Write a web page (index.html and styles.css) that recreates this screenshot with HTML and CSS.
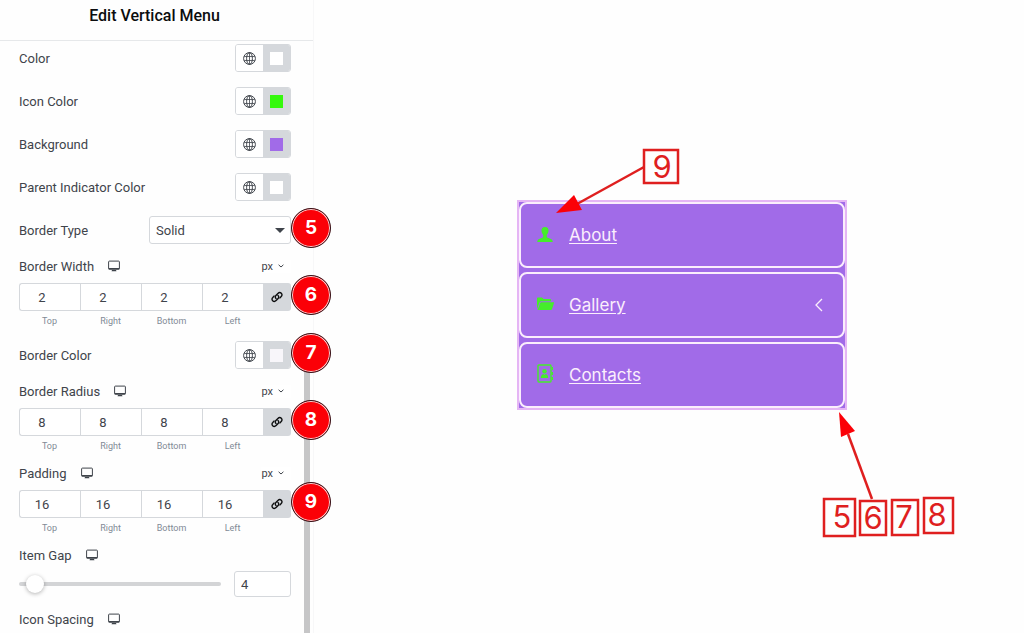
FILE: index.html
```html
<!DOCTYPE html>
<html lang="en">
<head>
    <meta charset="UTF-8">
    <meta name="viewport" content="width=device-width, initial-scale=1.0">
    <title>Edit Vertical Menu</title>
    <link rel="stylesheet" href="styles.css">
</head>
<body>
    <!-- shared icons -->
    <svg class="sprite" aria-hidden="true">
        <symbol id="globe" viewBox="0 0 13 13">
            <g fill="none" stroke="currentColor">
                <circle cx="6.5" cy="6.5" r="5.9"/>
                <ellipse cx="6.5" cy="6.5" rx="2.9" ry="5.9"/>
                <path d="M1.2 4.5h10.6M1.2 8.5h10.6M6.5.6v11.8" stroke-width=".8"/>
            </g>
        </symbol>
        <symbol id="desktop" viewBox="0 0 12 12">
            <rect x=".6" y="1.1" width="10.8" height="8" rx=".8" fill="none" stroke="currentColor"/>
            <path d="M.6 8h10.8v1.6H.6zM4 10h4l.5 1.2h-5z" fill="currentColor"/>
        </symbol>
        <symbol id="link" viewBox="0 0 12 12">
            <g fill="none" stroke="currentColor" stroke-width="1.4" stroke-linecap="round">
                <path d="M5 7.5C4 6.6 4 5.3 4.9 4.4l2-2c2.4-2.3 5.6.9 3.3 3.2L9 6.9"/>
                <path d="M7 4.5c1 .9 1 2.2.1 3.1l-2 2c-2.4 2.3-5.6-.9-3.3-3.2L3 5.1"/>
            </g>
        </symbol>
        <symbol id="caret" viewBox="0 0 6 4">
            <path d="M.6.8 3 3 5.4.8" fill="none" stroke="currentColor"/>
        </symbol>
    </svg>

    <aside class="panel">
        <h1 class="panel-title">Edit Vertical Menu</h1>
        <div class="controls">
            <div class="row">
                <span class="label">Color</span>
                <div class="color-control">
                    <button class="globe" aria-label="Global color"><svg class="icon"><use href="#globe"/></svg></button>
                    <button class="picker" aria-label="Pick color"><span class="swatch"></span></button>
                </div>
            </div>
            <div class="row">
                <span class="label">Icon Color</span>
                <div class="color-control">
                    <button class="globe" aria-label="Global icon color"><svg class="icon"><use href="#globe"/></svg></button>
                    <button class="picker" aria-label="Pick icon color"><span class="swatch green"></span></button>
                </div>
            </div>
            <div class="row">
                <span class="label">Background</span>
                <div class="color-control">
                    <button class="globe" aria-label="Global background"><svg class="icon"><use href="#globe"/></svg></button>
                    <button class="picker" aria-label="Pick background"><span class="swatch purple"></span></button>
                </div>
            </div>
            <div class="row">
                <span class="label">Parent Indicator Color</span>
                <div class="color-control">
                    <button class="globe" aria-label="Global parent indicator color"><svg class="icon"><use href="#globe"/></svg></button>
                    <button class="picker" aria-label="Pick parent indicator color"><span class="swatch"></span></button>
                </div>
            </div>
            <div class="row">
                <label class="label" for="border-type">Border Type</label>
                <div class="select-wrap">
                    <select id="border-type">
                        <option>Solid</option>
                        <option>Dashed</option>
                        <option>Dotted</option>
                    </select>
                </div>
                <span class="badge">5</span>
            </div>

            <div class="group">
                <div class="group-head">
                    <span class="label">Border Width</span>
                    <svg class="icon"><use href="#desktop"/></svg>
                    <button class="unit">px <svg class="caret"><use href="#caret"/></svg></button>
                </div>
                <div class="dimensions">
                    <input id="width-top" type="text" value="2">
                    <input id="width-right" type="text" value="2">
                    <input id="width-bottom" type="text" value="2">
                    <input id="width-left" type="text" value="2">
                    <button class="linked" aria-label="Link values"><svg class="icon"><use href="#link"/></svg></button>
                    <span class="badge">6</span>
                </div>
                <div class="captions">
                    <label for="width-top">Top</label>
                    <label for="width-right">Right</label>
                    <label for="width-bottom">Bottom</label>
                    <label for="width-left">Left</label>
                </div>
            </div>

            <div class="row">
                <span class="label">Border Color</span>
                <div class="color-control">
                    <button class="globe" aria-label="Global border color"><svg class="icon"><use href="#globe"/></svg></button>
                    <button class="picker" aria-label="Pick border color"><span class="swatch pale"></span></button>
                </div>
                <span class="badge">7</span>
            </div>

            <div class="group">
                <div class="group-head">
                    <span class="label">Border Radius</span>
                    <svg class="icon"><use href="#desktop"/></svg>
                    <button class="unit">px <svg class="caret"><use href="#caret"/></svg></button>
                </div>
                <div class="dimensions">
                    <input id="radius-top" type="text" value="8">
                    <input id="radius-right" type="text" value="8">
                    <input id="radius-bottom" type="text" value="8">
                    <input id="radius-left" type="text" value="8">
                    <button class="linked" aria-label="Link values"><svg class="icon"><use href="#link"/></svg></button>
                    <span class="badge">8</span>
                </div>
                <div class="captions">
                    <label for="radius-top">Top</label>
                    <label for="radius-right">Right</label>
                    <label for="radius-bottom">Bottom</label>
                    <label for="radius-left">Left</label>
                </div>
            </div>

            <div class="group">
                <div class="group-head">
                    <span class="label">Padding</span>
                    <svg class="icon"><use href="#desktop"/></svg>
                    <button class="unit">px <svg class="caret"><use href="#caret"/></svg></button>
                </div>
                <div class="dimensions">
                    <input id="padding-top" type="text" value="16">
                    <input id="padding-right" type="text" value="16">
                    <input id="padding-bottom" type="text" value="16">
                    <input id="padding-left" type="text" value="16">
                    <button class="linked" aria-label="Link values"><svg class="icon"><use href="#link"/></svg></button>
                    <span class="badge">9</span>
                </div>
                <div class="captions">
                    <label for="padding-top">Top</label>
                    <label for="padding-right">Right</label>
                    <label for="padding-bottom">Bottom</label>
                    <label for="padding-left">Left</label>
                </div>
            </div>

            <div class="group">
                <div class="group-head">
                    <label class="label" for="item-gap">Item Gap</label>
                    <svg class="icon"><use href="#desktop"/></svg>
                </div>
                <div class="slider">
                    <input id="item-gap" type="range" min="0" max="100" value="4">
                    <input class="slider-value" type="text" value="4" aria-label="Item gap value">
                </div>
            </div>

            <div class="group-head">
                <span class="label">Icon Spacing</span>
                <svg class="icon"><use href="#desktop"/></svg>
            </div>
        </div>
        <div class="scroll-thumb"></div>
    </aside>

    <main class="preview">
        <div class="menu-wrap">
            <nav class="menu">
                <div class="menu-item">
                    <svg class="menu-icon" viewBox="0 0 16 16"><path d="M8 0C5.5 0 4.3 1.500 4.500 3.600c.1 2 .8 3.400 1.700 4.200v1.600c0 .8-.6 1.100-1.600 1.500C2 11.800.3 12.300.2 15h15.600c-.1-2.700-1.800-3.200-4.400-4.100-1-.4-1.600-.7-1.600-1.500V7.800c.9-.8 1.600-2.200 1.700-4.200C11.700 1.500 10.500 0 8 0z"/></svg>
                    <a href="#">About</a>
                </div>
                <div class="menu-item">
                    <svg class="menu-icon" viewBox="0 0 16 16"><path d="M0 12V1.500C0 .9.4.5 1 .5h4l1.600 1.600H13c.6 0 1 .4 1 1v1.200H4.200c-.8 0-1.400.4-1.700 1.100z"/><path d="M.5 13 3.200 6c.2-.5.6-.8 1.200-.8h12c.5 0 .8.4.6.9l-2 6.100c-.2.5-.6.8-1.100.8z"/></svg>
                    <a href="#">Gallery</a>
                    <svg class="chevron" viewBox="0 0 16 16"><path d="M11 2 5 8l6 6"/></svg>
                </div>
                <div class="menu-item">
                    <svg class="menu-icon" viewBox="0 0 16 16"><path d="M2-2h11c.6 0 1 .4 1 1v15c0 .6-.4 1-1 1H2c-.6 0-1-.4-1-1V-1c0-.6.4-1 1-1z" fill="none" stroke="currentColor" stroke-width="1.4"/><path d="M14.500 0H16v3h-1.500zM14.500 5H16v3h-1.500zM14.500 10H16v3h-1.500z"/><circle cx="7.5" cy="4.3" r="2.2"/><path d="M3.800 11c0-2.400 1.200-3.600 2.400-3.900.8.7 1.800.7 2.600 0 1.200.3 2.400 1.500 2.400 3.900z"/></svg>
                    <a href="#">Contacts</a>
                </div>
            </nav>

            <!-- callouts, drawn from the top left corner of the menu -->
            <svg class="callouts" width="440" height="340">
                <g class="callout-line">
                    <path d="M127-33 60 4"/>
                    <path d="M331 234 355 299"/>
                    <rect x="127" y="-50" width="34" height="33"/>
                    <rect x="307" y="299" width="31" height="37"/>
                    <rect x="343" y="301" width="26" height="34"/>
                    <rect x="375" y="300" width="26" height="35"/>
                    <rect x="407" y="298" width="29" height="35"/>
                </g>
                <g class="callout-head">
                    <path d="M39 13 57-5 65 10z"/>
                    <path d="M322 212 324 237 338 231z"/>
                </g>
                <g class="callout-text">
                    <text x="145" y="-22">9</text>
                    <text x="325" y="328">5</text>
                    <text x="356" y="329">6</text>
                    <text x="387" y="328">7</text>
                    <text x="420" y="326">8</text>
                </g>
            </svg>
        </div>
    </main>
</body>
</html>
```
FILE: styles.css
```css
* {
    box-sizing: border-box;
}
body {
    display: flex;
    min-height: 100vh;
    margin: 0;
    background-color: #fefefe;
    font-family: Roboto, sans-serif;
    font-size: 13px;
    color: #3f444b;
}
button, input, select {
    margin: 0;
    padding: 0;
    border: none;
    background-color: #fff;
    font-family: inherit;
    font-size: inherit;
    color: inherit;
}
button {
    cursor: pointer;
}
.sprite {
    position: absolute;
    width: 0;
    height: 0;
}
.icon {
    display: block;
    width: 12px;
    height: 12px;
}

/* left panel */
.panel {
    position: relative;
    flex: none;
    width: 314px;
    border-right: 1px solid #f7f7f8;
}
.panel-title {
    margin: 0;
    padding: 6px 4px 14px 0;
    border-bottom: 1px solid #e6e8ea;
    font-size: 16px;
    line-height: 20px;
    font-weight: 500;
    text-align: center;
    color: #0c0d0e;
}
.controls {
    display: flex;
    flex-direction: column;
    gap: 15px;
    padding: 3px 22px 8px 19px;
}
.row {
    position: relative;
    display: flex;
    align-items: center;
    justify-content: space-between;
    height: 28px;
}
.color-control {
    display: flex;
    width: 56px;
    height: 28px;
    border: 1px solid #d5d8dc;
    border-radius: 3px;
    overflow: hidden;
}
.globe, .picker {
    flex: 1;
    display: flex;
    align-items: center;
    justify-content: center;
}
.globe .icon {
    width: 13px;
    height: 13px;
}
.picker {
    background-color: #d5d8dc;
}
.swatch {
    width: 13px;
    height: 13px;
    background-color: #fff;
}
.swatch.green {
    background-color: #35f90c;
}
.swatch.purple {
    background-color: #a16be8;
}
.swatch.pale {
    background-color: #f8f6fa;
}
.select-wrap {
    position: relative;
    width: 142px;
}
.select-wrap::after {
    content: "";
    position: absolute;
    top: 12px;
    right: 6px;
    border: 5px solid transparent;
    border-top-color: #3f444b;
    border-bottom: none;
    pointer-events: none;
}
select {
    width: 100%;
    height: 28px;
    padding: 0 6px;
    border: 1px solid #d5d8dc;
    border-radius: 3px;
    appearance: none;
}
.group-head {
    display: flex;
    align-items: center;
    gap: 14px;
    height: 14px;
}
.unit {
    display: flex;
    align-items: center;
    gap: 5px;
    margin-left: auto;
    padding-right: 7px;
    font-size: 11px;
}
.caret {
    width: 6px;
    height: 4px;
}
.dimensions {
    position: relative;
    display: flex;
    height: 28px;
    margin-top: 10px;
}
.dimensions input {
    flex: 1;
    min-width: 0;
    padding-right: 16px;
    border: 1px solid #d5d8dc;
    border-right: none;
    text-align: center;
}
.dimensions input:first-child {
    border-radius: 3px 0 0 3px;
}
.linked {
    display: flex;
    align-items: center;
    justify-content: center;
    width: 28px;
    border-radius: 0 3px 3px 0;
    background-color: #d5d8dc;
    color: #0c0d0e;
}
.captions {
    display: flex;
    margin-top: 5px;
    padding-right: 28px;
    font-size: 9px;
    line-height: 10px;
    color: #818a96;
}
.captions label {
    flex: 1;
    text-align: center;
}
.slider {
    display: flex;
    align-items: center;
    gap: 13px;
    margin-top: 9px;
}
input[type="range"] {
    flex: 1;
    min-width: 0;
    height: 18px;
    background: none;
    appearance: none;
}
input[type="range"]::-webkit-slider-runnable-track {
    height: 4px;
    border-radius: 2px;
    background-color: #d3d4d6;
}
input[type="range"]::-webkit-slider-thumb {
    width: 18px;
    height: 18px;
    margin-top: -7px;
    border-radius: 50%;
    background-color: #fff;
    box-shadow: 0 1px 4px rgba(0, 0, 0, 0.3);
    appearance: none;
}
.slider-value {
    width: 57px;
    height: 26px;
    padding: 0 6px;
    border: 1px solid #d5d8dc;
    border-radius: 3px;
}
.scroll-thumb {
    position: absolute;
    top: 350px;
    right: 3px;
    bottom: 0;
    width: 6px;
    border-radius: 3px 3px 0 0;
    background-color: #c6c6c7;
}
.badge {
    position: absolute;
    z-index: 1;
    top: -8px;
    left: 100%;
    width: 40px;
    height: 40px;
    border: 1px solid #33141a;
    border-radius: 50%;
    background-color: #fb0007;
    box-shadow: inset 0 0 0 1px #fbd5d6;
    font-family: Inter, sans-serif;
    font-size: 19px;
    line-height: 38px;
    font-weight: 700;
    text-align: center;
    color: #fff;
}

/* menu preview */
.preview {
    flex: 1;
    display: flex;
    justify-content: center;
    align-items: flex-start;
    padding: 200px 0 0 26px;
}
.menu-wrap {
    position: relative;
    width: 330px;
}
.menu {
    display: flex;
    flex-direction: column;
    gap: 4px;
    border: 2px solid #e5b5f5;
    background-color: #a16be8;
}
.menu-item {
    display: flex;
    align-items: center;
    gap: 16px;
    height: 66px;
    padding: 0 16px;
    border: 2px solid #fbeefc;
    border-radius: 8px;
}
.menu-item a {
    font-family: Inter, sans-serif;
    font-size: 17px;
    line-height: 24px;
    text-underline-offset: 2px;
    color: #fbeefc;
}
.menu-icon {
    width: 16px;
    height: 16px;
    overflow: visible;
    fill: currentColor;
    color: #45ee2a;
}
.chevron {
    width: 16px;
    height: 16px;
    margin-left: auto;
    fill: none;
    stroke: #fbeefc;
    stroke-width: 1.3;
}
.callouts {
    position: absolute;
    top: 0;
    left: 0;
    overflow: visible;
    pointer-events: none;
}
.callout-line {
    fill: none;
    stroke: #df1f1f;
    stroke-width: 2.5;
}
.callout-head {
    fill: #fb0007;
}
.callout-text {
    fill: #df1f1f;
    font-family: Inter, sans-serif;
    font-size: 31px;
    text-anchor: middle;
}
```
